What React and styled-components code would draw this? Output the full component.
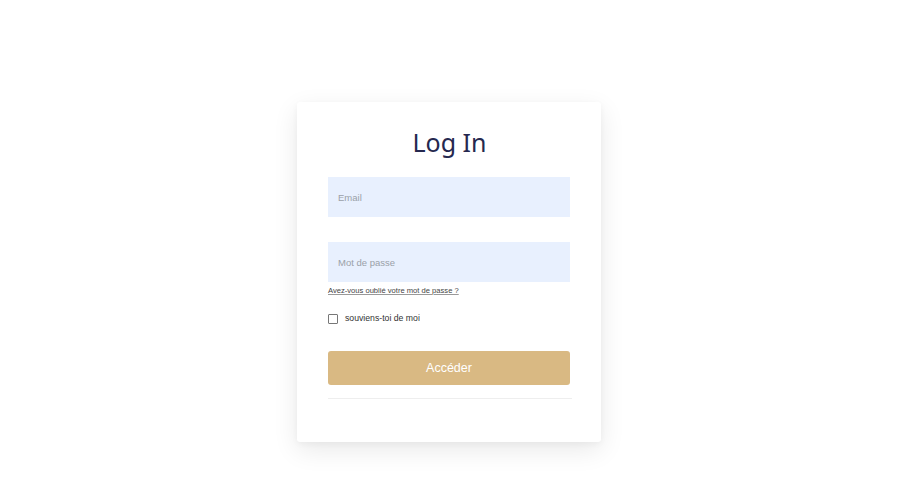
import styled, { createGlobalStyle } from 'styled-components';

const GlobalStyle = createGlobalStyle`
  html, body {
    margin: 0;
    padding: 0;
    background: #ffffff;
  }
  body {
    font-family: "Liberation Sans", Arial, sans-serif;
  }
`

const Page = styled.div`
  width: 900px;
  height: 479px;
  display: flex;
  justify-content: center;
  align-items: flex-start;
  padding: 102px 2px 0 0;
  box-sizing: border-box;
`

const Card = styled.div`
  width: 304px;
  box-sizing: border-box;
  padding: 24px 30px 43px 31px;
  background: #fff;
  border-radius: 3px;
  box-shadow: 0 8px 26px rgba(0, 0, 0, 0.09), 0 2px 6px rgba(0, 0, 0, 0.04);
  display: flex;
  flex-direction: column;
`

const Title = styled.h1`
  margin: 0;
  font-family: "Noto Sans", sans-serif;
  font-weight: 400;
  font-size: 25px;
  line-height: 32px;
  color: #25284f;
  text-align: center;
`

const Field = styled.div`
  margin-top: ${(p) => p.$top}px;
  width: 242px;
  height: 40px;
  background: #e8f0fe;
  display: flex;
  align-items: center;
  padding-left: 10px;
  box-sizing: border-box;
  font-size: 9.5px;
  color: #9aa0a8;
`

const Forgot = styled.a`
  margin-top: 4px;
  font-size: 7.6px;
  line-height: 10px;
  color: #444;
  text-decoration: underline;
  text-decoration-color: #999;
`

const CheckRow = styled.label`
  margin-top: 17px;
  display: flex;
  align-items: center;
  gap: 7px;
  font-size: 8.7px;
  line-height: 11px;
  color: #333;
`

const Box = styled.span`
  width: 8px;
  height: 8px;
  border: 1px solid #777;
  border-radius: 1px;
  background: #fff;
`

const Submit = styled.button`
  margin-top: 27px;
  width: 242px;
  height: 34px;
  border: none;
  border-radius: 3px;
  background: #d9b983;
  color: #fff;
  font-family: "Liberation Sans", Arial, sans-serif;
  font-size: 12.5px;
`

const Divider = styled.div`
  margin-top: 13px;
  width: 244px;
  height: 1px;
  background: #eeeeee;
`

function App() {
  return (
    <Page>
      <GlobalStyle />
      <Card>
        <Title>Log In</Title>
        <Field $top={19}>Email</Field>
        <Field $top={25}>Mot de passe</Field>
        <Forgot>Avez-vous oublié votre mot de passe ?</Forgot>
        <CheckRow>
          <Box />
          souviens-toi de moi
        </CheckRow>
        <Submit>Accéder</Submit>
        <Divider />
      </Card>
    </Page>
  );
}

export default App;
